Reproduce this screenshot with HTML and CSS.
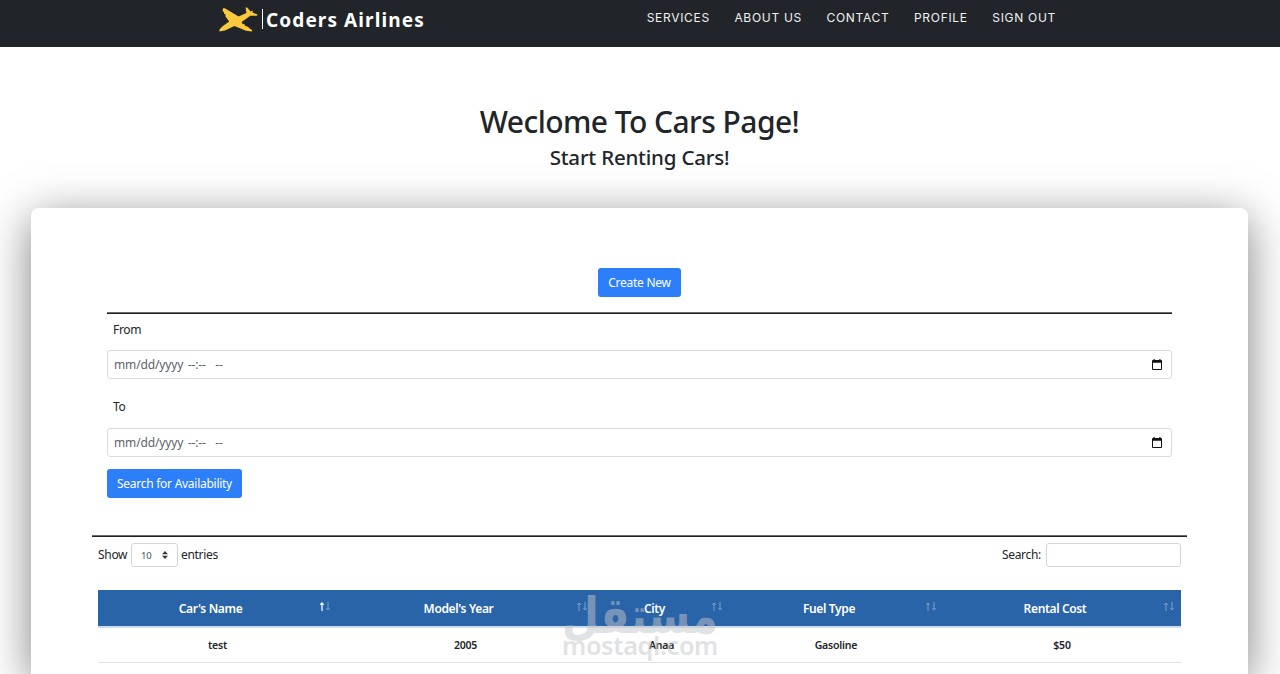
FILE: index.html
```html
<!DOCTYPE html>
<html lang="en">
<head>
    <meta charset="UTF-8">
    <meta name="viewport" content="width=device-width, initial-scale=1.0">
    <title>Cars - Coders Airlines</title>
    <link rel="stylesheet" href="styles.css">
</head>
<body>

    <!-- Navbar -->
    <header class="navbar">
        <a class="brand" href="#">
            <svg class="brand-plane" width="39" height="26" viewBox="0 0 39 26">
                <path fill="#fbc93d" d="M0.3 24.6 L0.6 22.2 L3.6 19.2 L10.2 14.4 L6.2 9 L6.8 7.8 L5 6.8 L5.2 5.4 L3.6 4 L4 1.2 L5.8 1.2 L19.6 9.6 L27.4 6 L26.6 0.6 L28.2 0.4 L31.6 4.4 L34 3.4 L33.4 5.6 L38.6 7.6 L38 8.8 L31.4 8.8 L22.6 15 L23.6 17 L25.6 17.2 L26 18.8 L28.4 19.4 L33.4 23.4 L32.6 24.6 L27 23.8 L15.4 19 L6 23.6 Z"/>
            </svg>
            <span class="brand-bar"></span>
            <span class="brand-name">Coders Airlines</span>
        </a>
        <nav class="nav-links">
            <a href="#">SERVICES</a>
            <a href="#">ABOUT US</a>
            <a href="#">CONTACT</a>
            <a href="#">PROFILE</a>
            <a href="#">SIGN OUT</a>
        </nav>
    </header>

    <div class="heading">
        <h1>Weclome To Cars Page!</h1>
        <h4>Start Renting Cars!</h4>
    </div>

    <main class="card">
        <!-- Search form -->
        <section class="search-form">
            <div class="create-row">
                <a class="btn btn-create" href="#">Create New</a>
            </div>
            <hr class="line">
            <form>
                <label for="from">From</label>
                <div class="form-control">
                    <input type="text" id="from" placeholder="mm/dd/yyyy --:--  --">
                    <svg width="10" height="11" viewBox="0 0 10 11"><path fill="#111" fill-rule="evenodd" d="M1.5 0 H2.7 V1 H7.3 V0 H8.5 V1 H9 Q10 1 10 2 V10 Q10 11 9 11 H1 Q0 11 0 10 V2 Q0 1 1 1 H1.5 Z M1 3.7 V10 H9 V3.7 Z"/></svg>
                </div>
                <label for="to" class="label-to">To</label>
                <div class="form-control">
                    <input type="text" id="to" placeholder="mm/dd/yyyy --:--  --">
                    <svg width="10" height="11" viewBox="0 0 10 11"><path fill="#111" fill-rule="evenodd" d="M1.5 0 H2.7 V1 H7.3 V0 H8.5 V1 H9 Q10 1 10 2 V10 Q10 11 9 11 H1 Q0 11 0 10 V2 Q0 1 1 1 H1.5 Z M1 3.7 V10 H9 V3.7 Z"/></svg>
                </div>
                <button type="button" class="btn btn-search">Search for Availability</button>
            </form>
        </section>

        <hr class="line line-wide">

        <!-- Cars table -->
        <section class="cars">
            <div class="table-tools">
                <div class="entries">
                    <span class="show">Show</span>
                    <span class="select-box">
                        <span>10</span>
                        <svg width="6" height="8" viewBox="0 0 6 8"><path fill="#343a40" d="M3 0 L6 3.2 H0 Z M0 4.8 H6 L3 8 Z"/></svg>
                    </span>
                    <span>entries</span>
                </div>
                <div class="filter">
                    <label for="search">Search:</label>
                    <input type="search" id="search">
                </div>
            </div>

            <table>
                <colgroup>
                    <col class="col-name"><col class="col-year"><col class="col-city"><col class="col-fuel"><col class="col-cost">
                </colgroup>
                <thead>
                    <tr>
                        <th class="sorted">Car's Name<svg class="sort" width="10" height="9" viewBox="0 0 10 9"><path class="up" d="M2 9 V1 M0.3 2.8 L2 1 L3.7 2.8"/><path d="M8 0 V8 M6.3 6.2 L8 8 L9.7 6.2"/></svg></th>
                        <th>Model's Year<svg class="sort" width="10" height="9" viewBox="0 0 10 9"><path class="up" d="M2 9 V1 M0.3 2.8 L2 1 L3.7 2.8"/><path d="M8 0 V8 M6.3 6.2 L8 8 L9.7 6.2"/></svg></th>
                        <th>City<svg class="sort" width="10" height="9" viewBox="0 0 10 9"><path class="up" d="M2 9 V1 M0.3 2.8 L2 1 L3.7 2.8"/><path d="M8 0 V8 M6.3 6.2 L8 8 L9.7 6.2"/></svg></th>
                        <th>Fuel Type<svg class="sort" width="10" height="9" viewBox="0 0 10 9"><path class="up" d="M2 9 V1 M0.3 2.8 L2 1 L3.7 2.8"/><path d="M8 0 V8 M6.3 6.2 L8 8 L9.7 6.2"/></svg></th>
                        <th>Rental Cost<svg class="sort" width="10" height="9" viewBox="0 0 10 9"><path class="up" d="M2 9 V1 M0.3 2.8 L2 1 L3.7 2.8"/><path d="M8 0 V8 M6.3 6.2 L8 8 L9.7 6.2"/></svg></th>
                    </tr>
                </thead>
                <tbody>
                    <tr>
                        <td>test</td>
                        <td>2005</td>
                        <td>Anaa</td>
                        <td>Gasoline</td>
                        <td>$50</td>
                    </tr>
                </tbody>
            </table>
        </section>
    </main>

    <!-- Watermark -->
    <svg class="watermark" width="170" height="91" viewBox="0 0 170 91">
        <text class="mark-ar" x="82" y="50" text-anchor="middle" textLength="156" lengthAdjust="spacingAndGlyphs">مستقل</text>
        <text class="mark-en" x="4" y="72" textLength="156" lengthAdjust="spacingAndGlyphs">mostaql.com</text>
    </svg>

</body>
</html>
```
FILE: styles.css
```css
* {
    box-sizing: border-box;
}

body {
    display: flex;
    flex-direction: column;
    margin: 0;
    height: 674px;
    overflow: hidden;
    background-color: #fff;
    color: #212529;
    font-family: "Noto Sans", "Open Sans", sans-serif;
    font-size: 12px;
    letter-spacing: -0.3px;
}

a {
    text-decoration: none;
}

/* Navbar */
.navbar {
    display: flex;
    flex-shrink: 0;
    justify-content: space-between;
    height: 47px;
    padding: 0 224px 0 219px;
    background-color: #212529;
}

.brand {
    display: flex;
    align-items: flex-start;
    color: #fff;
}

.brand-plane {
    margin-top: 7px;
}

.brand-bar {
    width: 1px;
    height: 20px;
    margin: 9px 3px 0 4px;
    background-color: #fff;
}

.brand-name {
    margin-top: 7px;
    font-size: 19px;
    line-height: 26px;
    font-weight: 700;
    letter-spacing: 1.1px;
    white-space: nowrap;
}

.nav-links {
    display: flex;
    gap: 24.5px;
    padding-top: 9px;
}

.nav-links a {
    color: #f1f1f1;
    font-family: Inter, sans-serif;
    font-size: 12px;
    line-height: 17px;
    letter-spacing: 0.7px;
    white-space: nowrap;
}

/* Page title */
.heading {
    flex-shrink: 0;
    height: 161px;
    padding-top: 56px;
    padding-right: 1px;
    text-align: center;
}

h1, h4 {
    margin: 0;
    font-weight: 500;
}

h1 {
    font-size: 30px;
    line-height: 37px;
    letter-spacing: -0.55px;
}

h4 {
    margin-top: 5px;
    font-size: 20.5px;
    line-height: 24px;
    letter-spacing: -0.2px;
}

/* Main card */
.card {
    flex: 1;
    width: 1217px;
    margin-left: 31px;
    padding: 60px 61px 0 61px;
    background-color: #fff;
    border-radius: 8px 8px 0 0;
    box-shadow: 0 10px 46px rgba(0, 0, 0, 0.5);
}

.search-form {
    height: 267px;
    padding: 0 15px;
}

.create-row {
    display: flex;
    justify-content: center;
}

.btn {
    display: block;
    height: 29px;
    padding: 0;
    border: 0;
    border-radius: 3px;
    background-color: #2d7ff9;
    color: #fff;
    font-family: inherit;
    font-size: 12px;
    line-height: 30px;
    letter-spacing: -0.27px;
    text-align: center;
    white-space: nowrap;
}

.btn-create {
    width: 83px;
}

.btn-search {
    width: 135px;
    margin-top: 12px;
    line-height: 29px;
}

.line {
    height: 2px;
    margin: 15px 0 0;
    border: 0;
    border-top: 1px solid #6b6b6b;
    background-color: #212121;
}

.line-wide {
    margin: 0;
}

form label {
    display: block;
    height: 36px;
    padding: 7px 6px 0;
    line-height: 17px;
}

form .label-to {
    height: 49px;
    padding-top: 19px;
}

.form-control {
    display: flex;
    align-items: center;
    justify-content: space-between;
    width: 100%;
    height: 29px;
    padding: 0 9px 0 6px;
    border: 1px solid #d9dcdf;
    border-radius: 3px;
}

.form-control input {
    width: 200px;
    padding: 0;
    border: 0;
    background: none;
    color: #495057;
    font-family: inherit;
    font-size: 12px;
    letter-spacing: -0.15px;
    word-spacing: 1.8px;
    white-space: pre;
}

.form-control input::placeholder {
    color: #5c636a;
}

/* Table */
.cars {
    padding: 6px 6px 0;
}

.table-tools {
    display: flex;
    justify-content: space-between;
    height: 47px;
}

.entries, .filter {
    display: flex;
    height: 24px;
    line-height: 23px;
}

.entries {
    gap: 3px;
}

.show {
    width: 30px;
}

.select-box {
    display: flex;
    align-items: center;
    justify-content: space-between;
    width: 47px;
    padding: 0 9px;
    border: 1px solid #d3d7db;
    border-radius: 3px;
    color: #495057;
    font-size: 9.5px;
}

.filter {
    gap: 5px;
}

.filter input {
    width: 135px;
    height: 24px;
    border: 1px solid #d3d7db;
    border-radius: 3px;
}

table {
    width: 1083px;
    table-layout: fixed;
    border-collapse: separate;
    border-spacing: 0;
    text-align: center;
}

.col-name { width: 239px; }
.col-year { width: 257px; }
.col-city { width: 135px; }
.col-fuel { width: 214px; }
.col-cost { width: 238px; }

th {
    position: relative;
    height: 38px;
    padding: 0 19px 0 5px;
    border-bottom: 2px solid #cfdcee;
    background-color: #2963a8;
    color: #fff;
    font-size: 12px;
    font-weight: 600;
    letter-spacing: -0.35px;
}

td {
    height: 35px;
    padding: 0;
    border-bottom: 1px solid #dee2e6;
    font-size: 10.5px;
    font-weight: 600;
    letter-spacing: -0.2px;
}

.sort {
    position: absolute;
    top: 12px;
    right: 7px;
    fill: none;
    stroke: #7ea2cd;
    stroke-width: 1;
}

.sorted .up {
    stroke: #e6eef7;
    stroke-width: 1.4;
}

/* Watermark over the table */
.watermark {
    position: absolute;
    left: 558px;
    top: 583px;
    opacity: 0.5;
    fill: #c4c6c9;
}

.mark-ar {
    font-family: "DejaVu Sans", sans-serif;
    font-size: 50px;
    font-weight: 700;
}

.mark-en {
    font-family: "Noto Sans", sans-serif;
    font-size: 25px;
    font-weight: 600;
}
```
